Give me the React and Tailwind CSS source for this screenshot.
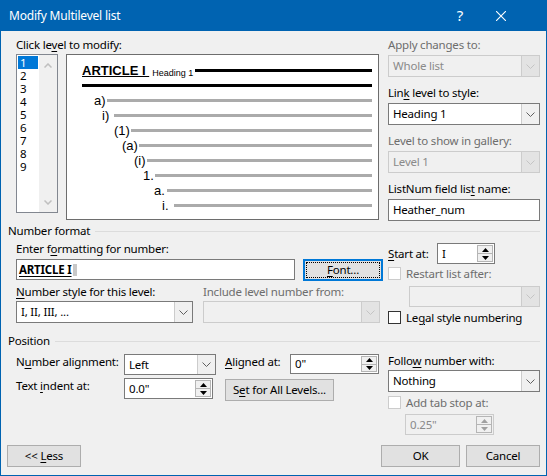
import React from 'react';
import clsx from 'clsx';

const U = ({ children }) => <span className="underline underline-offset-[2px]">{children}</span>;

const Chevron = ({ disabled }) => (
  <svg width="9" height="5" viewBox="0 0 9 5">
    <path d="M0.5 0.5 L4.5 4.5 L8.5 0.5" fill="none" stroke={disabled ? '#c4c4c4' : '#606060'} strokeWidth="1" />
  </svg>
);

const Tri = ({ up, disabled }) => (
  <svg width="7" height="4" viewBox="0 0 7 4">
    <path d={up ? 'M0 4 L3.5 0 L7 4 Z' : 'M0 0 L3.5 4 L7 0 Z'} fill={disabled ? '#a0a0a0' : '#000'} />
  </svg>
);

function Combo({ value, className, disabled }) {
  return (
    <div
      className={clsx(
        'flex border',
        disabled ? 'border-[#cccccc] bg-[#f0f0f0]' : 'border-[#7a7a7a] bg-white',
        className
      )}
    >
      <div className={clsx('flex-1 pl-[4px] flex items-center whitespace-nowrap', disabled ? 'text-[#8a8a8a]' : 'text-black')}>
        {value}
      </div>
      <div
        className={clsx(
          'w-[18px] flex items-center justify-center border-l',
          disabled ? 'border-[#cccccc] bg-[#e3e3e3]' : 'border-[#cccccc] bg-[#f0f0f0]'
        )}
      >
        <Chevron disabled={disabled} />
      </div>
    </div>
  );
}

function Spin({ value, className, disabled }) {
  return (
    <div
      className={clsx(
        'flex border',
        disabled ? 'border-[#cccccc] bg-[#f0f0f0]' : 'border-[#7a7a7a] bg-white',
        className
      )}
    >
      <div className={clsx('flex-1 pl-[4px] flex items-center', disabled ? 'text-[#8a8a8a]' : 'text-black')}>{value}</div>
      <div className="w-[16px] my-[1px] mr-[1px] flex flex-col border border-[#b5b5b5] bg-[#f0f0f0]">
        <div className="flex-1 flex items-center justify-center border-b border-[#b5b5b5]">
          <Tri up disabled={disabled} />
        </div>
        <div className="flex-1 flex items-center justify-center">
          <Tri disabled={disabled} />
        </div>
      </div>
    </div>
  );
}

const Check = ({ disabled }) => (
  <div className={clsx('w-[13px] h-[13px] border bg-white shrink-0', disabled ? 'border-[#cccccc]' : 'border-[#333333]')} />
);

const Button = ({ children, className }) => (
  <div className={clsx('flex items-center justify-center border border-[#adadad] bg-[#e1e1e1]', className)}>
    {children}
  </div>
);

function Field({ label, disabled, children }) {
  return (
    <div className="mb-[8px]">
      <div className={clsx('h-[16px] leading-[16px]', disabled && 'text-[#6d6d6d]')}>{label}</div>
      <div className="mt-[2px]">{children}</div>
    </div>
  );
}

// preview rows: label start / line start, relative to the content edge
const rows = [
  { label: 'a)', cls: 'ml-[12px] w-[13px]' },
  { label: 'i)', cls: 'ml-[20px] w-[12px]' },
  { label: '(1)', cls: 'ml-[32px] w-[17px]' },
  { label: '(a)', cls: 'ml-[40px] w-[17px]' },
  { label: '(i)', cls: 'ml-[52px] w-[13px]' },
  { label: '1.', cls: 'ml-[61px] w-[12px]' },
  { label: 'a.', cls: 'ml-[72px] w-[13px]' },
  { label: 'i.', cls: 'ml-[80px] w-[12px]' },
];

function Preview() {
  return (
    <div className="w-[313px] h-[166px] border border-[#6d6d6d] bg-white pt-[7px] pl-[15px] pr-[6px] font-['Liberation_Sans',Arial,sans-serif] tracking-normal text-black">
      <div className="flex items-start h-[18px]">
        <span className="text-[13px] leading-[18px] font-bold underline underline-offset-[1px] whitespace-pre">ARTICLE I </span>
        <span className="text-[9px] leading-[18px] ml-[3px] pt-[2px]">Heading 1</span>
        <div className="flex-1 h-[3px] bg-black mt-[7px] ml-[2px]" />
      </div>
      <div className="h-[3px] bg-black mt-[4px]" />
      <div className="mt-[6px]">
        {rows.map((r) => (
          <div key={r.label} className="flex items-center h-[15px]">
            <span className={clsx('text-[13px] leading-[15px] shrink-0', r.cls)}>{r.label}</span>
            <div className="flex-1 h-[3px] bg-[#ababab]" />
          </div>
        ))}
      </div>
    </div>
  );
}

function LevelList() {
  return (
    <div className="w-[42px] h-[159px] border border-[#828790] bg-white flex">
      <div className="w-[22px] pt-[1px]">
        {['1', '2', '3', '4', '5', '6', '7', '8', '9'].map((n) => (
          <div
            key={n}
            className={clsx(
              'h-[13px] leading-[13px] ml-[1px] w-[20px] pl-[2px]',
              n === '1' ? 'bg-[#0078d7] text-white' : 'text-black'
            )}
          >
            {n}
          </div>
        ))}
      </div>
      <div className="flex-1 bg-[#f0f0f0] flex flex-col items-center justify-between pt-[8px] pb-[7px]">
        <svg width="8" height="5" viewBox="0 0 8 5">
          <path d="M0.5 4.5 L4 1 L7.5 4.5" fill="none" stroke="#bfbfbf" strokeWidth="1.5" />
        </svg>
        <svg width="8" height="5" viewBox="0 0 8 5">
          <path d="M0.5 0.5 L4 4 L7.5 0.5" fill="none" stroke="#bfbfbf" strokeWidth="1.5" />
        </svg>
      </div>
    </div>
  );
}

function GroupHeader({ children }) {
  return (
    <div className="flex items-center h-[16px] -ml-[8px]">
      <span className="leading-[16px]">{children}</span>
      <div className="flex-1 h-px bg-[#dcdcdc] ml-[5px]" />
    </div>
  );
}

export default function App() {
  return (
    <div className="w-[547px] h-[476px] bg-[#0063b1] flex flex-col font-['Noto_Sans',sans-serif] text-[11.5px] tracking-[-0.2px] text-black whitespace-nowrap select-none">
      {/* Title bar */}
      <div className="h-[31px] shrink-0 flex items-center pl-[9px] text-white">
        <span className="flex-1 text-[12px]">Modify Multilevel list</span>
        <span className="text-[15px] leading-none">?</span>
        <svg className="ml-[33px] mr-[41px]" width="10" height="10" viewBox="0 0 10 10">
          <path d="M0 0 L10 10 M10 0 L0 10" stroke="#fff" strokeWidth="1.1" />
        </svg>
      </div>

      {/* Body */}
      <div className="flex-1 mx-[1px] mb-[1px] bg-[#f0f0f0] pl-[15px] pr-[6px] pb-[8px] flex flex-col">
        {/* Top section */}
        <div className="flex pt-[6px] gap-[9px]">
          <div className="w-[363px]">
            <div className="h-[16px] leading-[16px]">
              Click le<U>v</U>el to modify:
            </div>
            <div className="flex mt-[1px] gap-[8px]">
              <LevelList />
              <Preview />
            </div>
          </div>
          <div className="w-[152px]">
            <Field label="Apply changes to:" disabled>
              <Combo value="Whole list" disabled className="h-[22px]" />
            </Field>
            <Field label={<>Lin<U>k</U> level to style:</>}>
              <Combo value="Heading 1" className="h-[22px]" />
            </Field>
            <Field label="Level to show in gallery:" disabled>
              <Combo value="Level 1" disabled className="h-[22px]" />
            </Field>
            <div>
              <div className="h-[16px] leading-[16px]">
                ListNum field lis<U>t</U> name:
              </div>
              <div className="mt-[2px] h-[22px] border border-[#7a7a7a] bg-white pl-[4px] flex items-center">Heather_num</div>
            </div>
          </div>
        </div>

        {/* Number format */}
        <div className="mt-[2px]">
          <GroupHeader>Number format</GroupHeader>
        </div>
        <div className="flex gap-[5px]">
          <div className="w-[367px]">
            <div className="h-[16px] leading-[16px] mt-[2px]">
              Enter f<U>o</U>rmatting for number:
            </div>
            <div className="flex mt-[2px]">
              <div className="w-[279px] h-[21px] border border-[#7a7a7a] bg-white pl-[2px] flex items-center">
                <span className="font-bold underline underline-offset-[2px]">ARTICLE I</span>
                <span className="w-[4px] h-[12px] bg-[#c8c8c8] ml-[1px]" />
              </div>
              <div className="ml-auto w-[80px] h-[22px] border-2 border-[#0078d7] bg-[#e1e1e1] p-px">
                <div className="w-full h-full border border-dotted border-black flex items-center justify-center">
                  <span>
                    <U>F</U>ont...
                  </span>
                </div>
              </div>
            </div>
            <div className="flex mt-[3px] h-[16px] leading-[16px]">
              <span className="w-[187px]">
                <U>N</U>umber style for this level:
              </span>
              <span className="text-[#6d6d6d]">Include level number from:</span>
            </div>
            <div className="flex mt-[1px] gap-[10px]">
              <Combo value="I, II, III, ..." className="w-[177px] h-[22px]" />
              <Combo value="" disabled className="w-[177px] h-[22px]" />
            </div>
          </div>
          <div className="w-[152px]">
            <div className="flex items-center mt-[4px] h-[21px]">
              <span className="w-[49px]">
                <U>S</U>tart at:
              </span>
              <Spin value="I" className="w-[58px] h-[21px]" />
            </div>
            <div className="flex items-center mt-[3px] h-[13px]">
              <Check disabled />
              <span className="ml-[5px] text-[#6d6d6d]">Restart list after:</span>
            </div>
            <Combo value="" disabled className="ml-[21px] mt-[6px] h-[21px]" />
            <div className="flex items-center mt-[4px] h-[13px]">
              <Check />
              <span className="ml-[5px]">
                Le<U>g</U>al style numbering
              </span>
            </div>
          </div>
        </div>

        {/* Position */}
        <div className="mt-[9px]">
          <GroupHeader>Position</GroupHeader>
        </div>
        <div className="flex gap-[9px]">
          <div className="w-[363px] pt-[5px]">
            <div className="flex items-start">
              <span className="w-[108px] h-[16px] leading-[16px] shrink-0">
                N<U>u</U>mber alignment:
              </span>
              <Combo value="Left" className="w-[92px] h-[21px]" />
              <span className="ml-[9px] w-[65px] h-[16px] leading-[16px] shrink-0">
                <U>A</U>ligned at:
              </span>
              <Spin value={'0"'} className="w-[89px] h-[20px]" />
            </div>
            <div className="flex items-start mt-[3px]">
              <span className="w-[108px] h-[16px] leading-[16px] shrink-0">
                Text <U>i</U>ndent at:
              </span>
              <Spin value={'0.0"'} className="w-[89px] h-[21px]" />
              <Button className="ml-[12px] mt-[1px] w-[109px] h-[22px]">
                <span>
                  S<U>e</U>t for All Levels...
                </span>
              </Button>
            </div>
          </div>
          <div className="w-[152px] pt-[4px]">
            <div className="h-[16px] leading-[16px]">
              Follo<U>w</U> number with:
            </div>
            <Combo value="Nothing" className="mt-[1px] h-[22px]" />
            <div className="flex items-center mt-[4px] h-[13px]">
              <Check disabled />
              <span className="ml-[5px] text-[#6d6d6d]">Add tab stop at:</span>
            </div>
            <Spin value={'0.25"'} disabled className="ml-[17px] mt-[5px] w-[89px] h-[21px]" />
          </div>
        </div>

        {/* Buttons */}
        <div className="mt-auto flex h-[22px]">
          <Button className="-ml-[9px] w-[74px] h-[22px]">
            <span>
              &lt;&lt; <U>L</U>ess
            </span>
          </Button>
          <Button className="ml-auto w-[79px] h-[22px]">OK</Button>
          <Button className="ml-[6px] w-[74px] h-[22px]">Cancel</Button>
        </div>
      </div>
    </div>
  );
}
